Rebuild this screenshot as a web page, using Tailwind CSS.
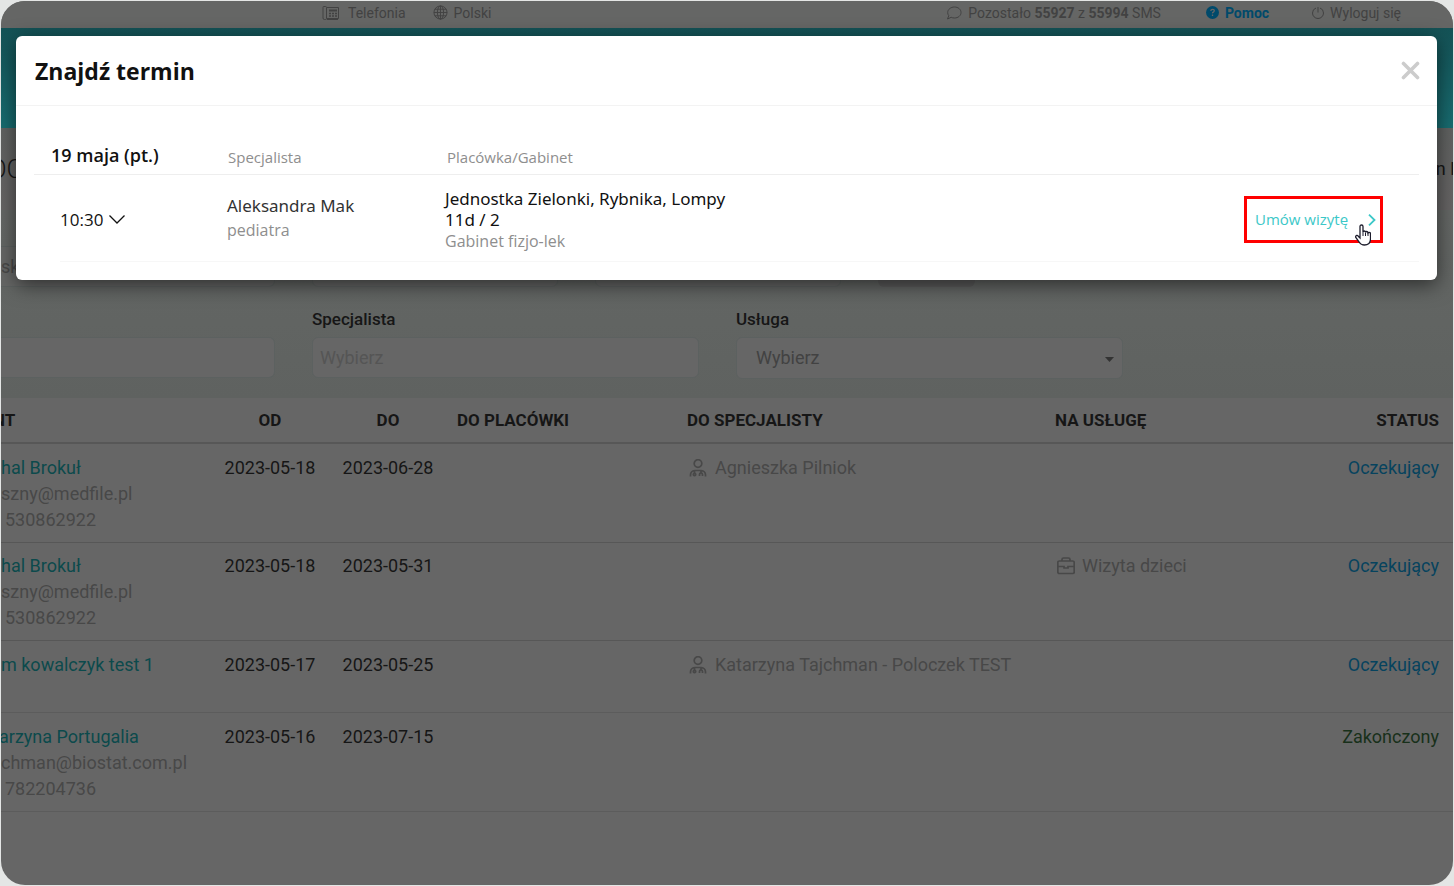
<!DOCTYPE html>
<html lang="pl">
<head>
<meta charset="utf-8">
<title>Znajdź termin</title>
<script src="https://cdn.jsdelivr.net/npm/@tailwindcss/browser@4"></script>
</head>
<body class="bg-[#e4e6e5] font-['Roboto',sans-serif]">
<div class="relative flex min-h-screen flex-col p-px">
  <div class="flex grow flex-col overflow-hidden rounded-3xl bg-[#666666] text-lg text-[#161616]">

    <nav class="flex h-[27px] shrink-0 items-center bg-[#656665] pr-[52px] pb-1 pl-[321px] text-sm text-[#424242]">
      <a href="#" class="mr-[27px] flex items-center gap-2">
        <svg class="h-4 w-[18px]" viewBox="0 0 18 16" fill="none" stroke="currentColor" stroke-width="1"><path d="M5 2.5h11.500v11H5M1.500 1.500h2q1 0 1 1v11q0 1-1 1h-1q-1.500 0-1.500-1.500V2.500q0-1 .500-1zM5 14.500h11"/><path d="M7 5.500h8" stroke-width="2"/><path d="M7 8.500h2M10 8.500h2M13 8.500h2M7 11h2M10 11h2M13 11h2" stroke-width="1.500"/></svg>
        Telefonia</a>
      <a href="#" class="flex items-center gap-1.5">
        <svg class="size-[15px]" viewBox="0 0 16 16" fill="none" stroke="currentColor"><circle cx="8" cy="8" r="7"/><ellipse cx="8" cy="8" rx="3.300" ry="7"/><path d="M8 1v14M1 8h14M2 4.500h12M2 11.500h12"/></svg>
        Polski</a>
      <span class="ml-auto flex items-center gap-1.5">
        <svg class="size-4" viewBox="0 0 16 16" fill="none" stroke="currentColor"><path d="M8.500 2c3.700 0 6.500 2.400 6.500 5.500S12.200 13 8.500 13c-1.200 0-2.300-.200-3.300-.700L1.500 14l1.300-3.300C2 9.800 1.700 8.700 1.700 7.500 1.700 4.400 4.800 2 8.500 2z"/></svg>
        <span>Pozostało <b class="font-bold">55927</b> z <b class="font-bold">55994</b> SMS</span></span>
      <a href="#" class="ml-[45px] flex items-center gap-1.5 font-bold text-[#004a6b]">
        <svg class="size-[13px]" viewBox="0 0 14 14"><circle cx="7" cy="7" r="7" fill="currentColor"/><path d="M5.200 5.500q0-1.900 1.900-1.900t1.800 1.600q0 .900-1 1.400t-.900 1.300M7 9.200v1.500" fill="none" stroke="#666" stroke-width="1.400"/></svg>
        Pomoc</a>
      <a href="#" class="ml-[43px] flex items-center gap-1.5">
        <svg class="size-3" viewBox="0 0 12 12" fill="none" stroke="currentColor"><path d="M4 1Q.500 2.300.500 6a5.500 5.500 0 0 0 11 0Q11.500 2.300 8 1M6 0v5.500"/></svg>
        Wyloguj się</a>
    </nav>

    <div class="h-[100px] shrink-0 bg-linear-to-b from-[#145256] to-[#186c70]"></div>

    <header class="flex h-[82px] shrink-0 items-center justify-between overflow-hidden bg-linear-to-b from-[#606261] to-[#666464]">
      <h1 class="-ml-3 text-[26px] font-light">OC</h1>
      <span class="-mr-0.5 text-lg">n I</span>
    </header>

    <form class="shrink-0 overflow-hidden bg-linear-to-b from-[#646765] to-[#5f6260] pt-9 pb-[19px]">
      <div class="flex h-[41px] gap-[37px]">
        <input aria-label="Szukaj" value="ske" class="w-[274px] rounded-r-md border border-l-0 border-[#5c6160] bg-[#656665] text-[#484848]">
        <input aria-label="Od" class="w-[246px] rounded-md border border-[#5c6160] bg-[#656665] px-2">
        <input aria-label="Do" class="w-[246px] rounded-md border border-[#5c6160] bg-[#656665] px-2">
        <button type="button" aria-label="Szukaj" class="w-[97px] rounded-md bg-[#5c5c5c]"></button>
      </div>
      <div class="flex items-start gap-[37px] pt-5">
        <div class="w-[274px] pt-[30px]">
          <input aria-label="Placówka" class="h-[41px] w-full rounded-r-md border border-l-0 border-[#5c6160] bg-[#666666] px-2">
        </div>
        <div class="flex w-[387px] flex-col">
          <label for="spec" class="h-[30px] text-[17px] leading-6 font-medium">Specjalista</label>
          <input id="spec" placeholder="Wybierz" class="h-[41px] rounded-md border border-[#5c6160] bg-[#666666] px-[7px] placeholder:text-[#555555]">
        </div>
        <div class="relative flex w-[387px] flex-col">
          <label for="service" class="h-[30px] text-[17px] leading-6 font-medium">Usługa</label>
          <select id="service" class="h-[42px] appearance-none rounded-md border border-[#5c6160] bg-[#666666] pl-[19px] text-[#424242]"><option>Wybierz</option></select>
          <svg class="pointer-events-none absolute right-[9px] bottom-[17px] h-[5px] w-[9px]" viewBox="0 0 9 5"><path d="M0 0h9L4.500 5z" fill="#333"/></svg>
        </div>
      </div>
    </form>

    <table class="w-full table-fixed border-collapse text-left leading-[26px]">
      <colgroup><col class="w-[210px]"><col class="w-[118px]"><col class="w-[118px]"><col class="w-[230px]"><col class="w-[368px]"><col></colgroup>
      <thead>
        <tr class="h-[45px] border-b-2 border-[#575757] text-[17px]">
          <th class="font-bold"><span class="-ml-2">NT</span></th>
          <th class="text-center font-bold">OD</th>
          <th class="text-center font-bold">DO</th>
          <th class="pl-2.5 font-bold">DO PLACÓWKI</th>
          <th class="pl-2.5 font-bold">DO SPECJALISTY</th>
          <th class="pr-3.5 pl-2.5 font-bold"><div class="flex justify-between"><span>NA USŁUGĘ</span><span>STATUS</span></div></th>
        </tr>
      </thead>
      <tbody class="align-top">
        <tr class="h-[99px] border-b border-[#575757]">
          <td class="pt-[11px] text-[#484848]"><a href="#" class="block text-[#0c4a4c]">hal Brokuł</a>szny@medfile.pl<div class="pl-1">530862922</div></td>
          <td class="pt-[11px] text-center">2023-05-18</td>
          <td class="pt-[11px] text-center">2023-06-28</td>
          <td></td>
          <td class="pt-[11px] pl-3 text-[#484848]"><div class="flex items-center gap-2"><svg class="size-[18px]" viewBox="0 0 18 18" fill="none" stroke="currentColor" stroke-width="1.700"><circle cx="9" cy="4.500" r="3.800"/><path d="M1.500 17.500v-1.500q0-4 4.500-4.500h6q4.500.500 4.500 4.500v1.500M5.500 11.500v3M12 11.500v2M10.500 17v-1.500q0-1.500 1.500-1.500t1.500 1.500V17"/><circle cx="5.500" cy="15.500" r="1.200"/></svg>Agnieszka Pilniok</div></td>
          <td class="pt-[11px] pr-3.5 text-right"><a href="#" class="text-[#06435e]">Oczekujący</a></td>
        </tr>
        <tr class="h-[98px] border-b border-[#575757]">
          <td class="pt-[10px] text-[#484848]"><a href="#" class="block text-[#0c4a4c]">hal Brokuł</a>szny@medfile.pl<div class="pl-1">530862922</div></td>
          <td class="pt-[10px] text-center">2023-05-18</td>
          <td class="pt-[10px] text-center">2023-05-31</td>
          <td></td>
          <td></td>
          <td class="pt-[10px] pr-3.5 pl-3"><div class="flex items-center justify-between"><span class="flex items-center gap-[7px] text-[#484848]"><svg class="size-[18px]" viewBox="0 0 18 18" fill="none" stroke="currentColor" stroke-width="1.700"><rect x=".800" y="4" width="16.400" height="12.500" rx="1.500"/><path d="M5 4V2.500Q5 1 6.500 1h5Q13 1 13 2.500V4M1 9.500h6v1.500h4V9.500h6"/></svg>Wizyta dzieci</span><a href="#" class="text-[#06435e]">Oczekujący</a></div></td>
        </tr>
        <tr class="h-[72px] border-b border-[#5c5c5c]">
          <td class="pt-[11px]"><a href="#" class="text-[#0c4a4c]">m kowalczyk test 1</a></td>
          <td class="pt-[11px] text-center">2023-05-17</td>
          <td class="pt-[11px] text-center">2023-05-25</td>
          <td></td>
          <td class="pt-[11px] pl-3 text-[#484848]"><div class="flex items-center gap-2"><svg class="size-[18px]" viewBox="0 0 18 18" fill="none" stroke="currentColor" stroke-width="1.700"><circle cx="9" cy="4.500" r="3.800"/><path d="M1.500 17.500v-1.500q0-4 4.500-4.500h6q4.500.500 4.500 4.500v1.500M5.500 11.500v3M12 11.500v2M10.500 17v-1.500q0-1.500 1.500-1.500t1.500 1.500V17"/><circle cx="5.500" cy="15.500" r="1.200"/></svg>Katarzyna Tajchman - Poloczek TEST</div></td>
          <td class="pt-[11px] pr-3.5 text-right"><a href="#" class="text-[#06435e]">Oczekujący</a></td>
        </tr>
        <tr class="h-[99px] border-b border-[#5c5c5c]">
          <td class="pt-[11px] text-[#484848]"><a href="#" class="-ml-0.5 block text-[#0c4a4c]">arzyna Portugalia</a>chman@biostat.com.pl<div class="pl-1">782204736</div></td>
          <td class="pt-[11px] text-center">2023-05-16</td>
          <td class="pt-[11px] text-center">2023-07-15</td>
          <td></td>
          <td></td>
          <td class="pt-[11px] pr-3.5 text-right text-[#18301a]">Zakończony</td>
        </tr>
      </tbody>
    </table>
  </div>

  <section role="dialog" aria-labelledby="dialog-title" class="absolute top-9 right-[17px] left-4 rounded-md bg-white font-['Open_Sans',sans-serif] text-[#111] shadow-[0_5px_20px_rgba(0,0,0,0.55)]">
    <header class="flex h-[70px] items-center justify-between border-b border-[#f3f3f3] pr-[17px] pl-[19px]">
      <h2 id="dialog-title" class="pt-0.5 text-[23px] font-bold">Znajdź termin</h2>
      <button type="button" aria-label="Zamknij" class="text-[#cccccc]"><svg class="size-[19px]" viewBox="0 0 19 19" fill="none" stroke="currentColor" stroke-width="3.600" stroke-linecap="round"><path d="M2.500 2.500l14 14M16.500 2.500l-14 14"/></svg></button>
    </header>
    <div class="px-[18px] pt-[34px] pb-[18px]">
      <div class="flex h-[35px] items-start border-b border-[#eeeeee] pl-[17px]">
        <h3 class="w-[177px] text-lg leading-[30px] font-semibold">19 maja (pt.)</h3>
        <span class="w-[219px] text-[15px] leading-[34px] text-[#8e8e8e]">Specjalista</span>
        <span class="text-[15px] leading-[34px] text-[#8e8e8e]">Placówka/Gabinet</span>
      </div>
      <div class="ml-[26px] flex h-[87px] items-center border-b border-[#f7f7f7] pt-[3px]">
        <button type="button" class="flex w-[167px] items-center gap-1.5 text-[17px]">10:30
          <svg class="h-[9px] w-4" viewBox="0 0 16 9" fill="none" stroke="currentColor" stroke-width="1.300"><path d="M.500.500L8 8 15.500.500"/></svg></button>
        <div class="w-[218px] pb-1 leading-6"><div class="font-['Noto_Sans',sans-serif] text-[17px] text-[#333]">Aleksandra Mak</div><div class="text-base leading-6 text-[#8e8e8e]">pediatra</div></div>
        <div class="w-[300px] font-['Noto_Sans',sans-serif] text-[17px] leading-[21px]">Jednostka Zielonki, Rybnika, Lompy 11d / 2<div class="font-['Open_Sans',sans-serif] text-base leading-[22px] text-[#8e8e8e]">Gabinet fizjo-lek</div></div>
        <div class="relative mr-9 ml-auto">
          <button type="button" class="flex h-[47px] w-[139px] items-center justify-between border-3 border-[#ff0000] pr-1 pl-2 text-[15px] text-[#3cc8c8]">Umów wizytę
            <svg class="h-3 w-2" viewBox="0 0 8 12" fill="none" stroke="currentColor" stroke-width="1.800"><path d="M1 .700L6.500 6 1 11.300"/></svg></button>
          <svg class="absolute right-3 -bottom-[3px] h-[22px] w-4" viewBox="0 0 16 22"><path d="M5 14V2.500Q5 1 6.500 1T8 2.500V8q0-1 1.200-1t1.300 1.200q.200-.700 1.200-.700T13 8.800q.300-.500 1-.500 1.500 0 1.500 1.500V15q0 6-6 6-3.500 0-5-2.500L.800 13.500Q.300 12 1.500 11.500q1.300-.200 2 1L5 14z" fill="#fff" stroke="#1c1c2c" stroke-width="1.300"/><path d="M8 8v4M10.500 8.500V12M13 9v3" stroke="#1c1c2c"/></svg>
        </div>
      </div>
    </div>
  </section>
</div>
</body>
</html>
